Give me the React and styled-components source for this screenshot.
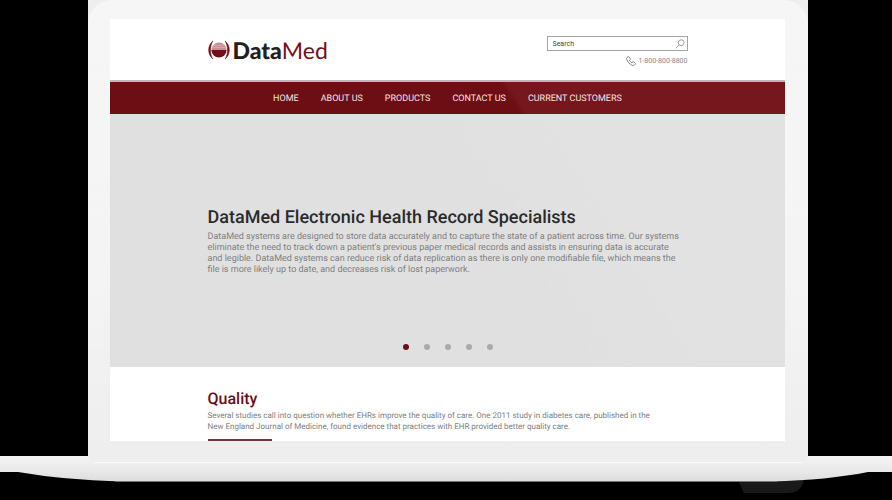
import React, { useState } from "react";
import styled, { createGlobalStyle } from "styled-components";

const GlobalStyle = createGlobalStyle`
  *, *::before, *::after { box-sizing: border-box; }
  body { margin: 0; background: #000; font-family: Roboto, "Liberation Sans", sans-serif; text-rendering: geometricPrecision; }
  h1, h2, p, ul { margin: 0; padding: 0; }
`;

const Stage = styled.div`
  display: flex;
  flex-direction: column;
  min-height: 100vh;
  overflow: hidden;
  background: #000;
`;

const LidBack = styled.div`
  margin: 0 84px 0 88px;
  background: #eeeeee;
`;

const Lid = styled.div`
  padding: 19px 23px 15px 22px;
  border-radius: 24px 24px 4px 4px;
  background: linear-gradient(#f6f6f6, #f4f4f4 60%, #eeeeee);
`;

const Screen = styled.div`
  background: #fff;
  overflow: hidden;
`;

const Column = styled.div`
  width: 100%;
  max-width: 480px;
  margin: 0 auto;
`;

const Header = styled.header`
  padding: 17px 0 13px;
  border-bottom: 2px solid #bdb9b9;
`;

const HeaderRow = styled(Column)`
  display: flex;
  align-items: flex-start;
  justify-content: space-between;
`;

const Logo = styled.a`
  display: flex;
  align-items: center;
  gap: 3px;
  height: 28px;
  color: #741019;
  text-decoration: none;
  font: 400 23px/28px Lato, sans-serif;

  strong { color: #202020; font-weight: 900; }
`;

const Contact = styled.div`
  display: flex;
  flex-direction: column;
  align-items: flex-end;
  gap: 4px;
`;

const SearchBox = styled.form`
  display: flex;
  align-items: center;
  width: 141px;
  height: 15px;
  padding: 0 2px 0 5px;
  border: 1px solid #a5a5a5;
`;

const SearchInput = styled.input`
  flex: 1;
  min-width: 0;
  padding: 0;
  border: 0;
  outline: 0;
  background: none;
  color: #444;
  font: 400 7px/12px Roboto, sans-serif;

  &::placeholder { color: #444; opacity: 1; }
`;

const SearchButton = styled.button`
  display: flex;
  padding: 0;
  border: 0;
  background: none;
  cursor: pointer;
`;

const Phone = styled.a`
  display: flex;
  align-items: center;
  gap: 2px;
  color: #858585;
  text-decoration: none;
  font-size: 7px;
  line-height: 12px;
`;

const Nav = styled.nav`
  display: flex;
  justify-content: center;
  gap: 22px;
  padding-top: 2px;
  background: linear-gradient(58deg, #6d0d14 0 59%, #76161d 60% 100%);
`;

const NavLink = styled.a`
  color: #f3e6e7;
  font-size: 9px;
  line-height: 30px;
  text-decoration: none;
  white-space: nowrap;
`;

const Hero = styled.section`
  padding: 92px 0 17px;
  background: linear-gradient(58deg, #e0e0e0 0 55%, #e2e2e2 75% 100%);
`;

const HeroTitle = styled.h1`
  color: #2b2b2b;
  font-size: 18px;
  font-weight: 500;
  line-height: 24px;
  white-space: nowrap;
`;

const Copy = styled.p`
  color: #808080;
  font-size: ${({ $size }) => $size}px;
  line-height: 11px;
  white-space: nowrap;
`;

const HeroCopy = styled(Copy)`
  padding-top: 2px;
`;

const Dots = styled.div`
  display: flex;
  justify-content: center;
  gap: 15px;
  padding-top: 68px;
`;

const Dot = styled.button`
  width: 6px;
  height: 6px;
  padding: 0;
  border: 0;
  border-radius: 50%;
  background: ${({ $active }) => ($active ? "#681019" : "#aaaaaa")};
  cursor: pointer;
`;

const Quality = styled.section`
  padding-top: 21px;
`;

const QualityTitle = styled.h2`
  color: #681019;
  font-size: 16px;
  font-weight: 500;
  line-height: 22px;
`;

const Rule = styled.div`
  width: 64px;
  height: 2px;
  margin-top: 7px;
  background: #74353c;
`;

const Base = styled.svg`
  display: block;
  width: 100%;
  height: 44px;
`;

const links = ["HOME", "ABOUT US", "PRODUCTS", "CONTACT US", "CURRENT CUSTOMERS"];

function LogoMark() {
  return (
    <svg width="22" height="20" viewBox="0 0 22 20" aria-hidden="true">
      <path d="M3.4 10a7.6 7.6 0 0 1 15.2 0z" fill="#c98f93" />
      <path d="M5 5.5h12M4 7.5h14" stroke="#dcb8ba" strokeWidth=".6" />
      <path d="M3.4 10a7.6 7.6 0 0 0 15.2 0z" fill="#741019" />
      <path d="M5 .9C-.8 5.200-.8 14.800 5 19.100 1.700 14.500 1.700 5.500 5 .9zM17 .9c5.800 4.300 5.800 13.900 0 18.200 3.300-4.600 3.300-13.600 0-18.200z" fill="#741019" stroke="#741019" strokeWidth=".5" />
    </svg>
  );
}

function SearchIcon() {
  return (
    <svg width="10" height="10" viewBox="0 0 10 10" fill="none" stroke="#858585" strokeWidth=".8" aria-hidden="true">
      <circle cx="6.200" cy="3.700" r="2.900" />
      <path d="M4 5.900.6 9.300" />
    </svg>
  );
}

function PhoneIcon() {
  return (
    <svg width="10" height="10" viewBox="0 0 24 24" fill="none" stroke="#806f71" strokeWidth="2" strokeLinejoin="round" aria-hidden="true">
      <path d="M2 4 5 1.500Q6 1 7 2l3.500 5q.5 1-.5 2L8 10.500q2 4 6 6L15.500 14q1-1 2-.5l5 3.500q1 1 .3 2L20 22q-2 1.500-6 0Q4 17 1.500 8 1 5.500 2 4z" />
    </svg>
  );
}

function LaptopBase() {
  return (
    <Base viewBox="0 0 892 44" preserveAspectRatio="none" aria-hidden="true">
      <defs>
        <linearGradient id="metal" x1="0" y1="0" x2="0" y2="1">
          <stop offset="0" stopColor="#f4f4f4" />
          <stop offset=".5" stopColor="#ebebeb" />
          <stop offset="1" stopColor="#dddddd" />
        </linearGradient>
      </defs>
      <path d="M738 24h66q-3 13-16 13h-44z" fill="#191919" />
      <path d="M0 0h892v16h-24Q828 24 772 25.500H120Q64 24 18 16H0z" fill="url(#metal)" />
      <path d="M88 0h720v1q-1 5-7 5H95q-6 0-7-5z" fill="#eeeeee" />
      <path d="M94 6.500h708" stroke="#fafafa" />
      <path d="M115 25.500h662" stroke="#777" strokeWidth=".8" />
    </Base>
  );
}

export default function App() {
  const [slide, setSlide] = useState(0);
  return (
    <>
      <GlobalStyle />
      <Stage>
        <LidBack>
          <Lid>
            <Screen>
              <Header>
                <HeaderRow>
                  <Logo href="#home">
                    <LogoMark />
                    <span><strong>Data</strong>Med</span>
                  </Logo>
                  <Contact>
                    <SearchBox role="search" onSubmit={(e) => e.preventDefault()}>
                      <SearchInput type="text" aria-label="Search" placeholder="Search" />
                      <SearchButton type="submit" aria-label="Submit search"><SearchIcon /></SearchButton>
                    </SearchBox>
                    <Phone href="tel:18008008800"><PhoneIcon />1-800-800-8800</Phone>
                  </Contact>
                </HeaderRow>
              </Header>
              <Nav>
                {links.map((label) => (
                  <NavLink key={label} href="#">{label}</NavLink>
                ))}
              </Nav>
              <Hero>
                <Column>
                  <HeroTitle>DataMed Electronic Health Record Specialists</HeroTitle>
                  <HeroCopy $size={9}>
                    DataMed systems are designed to store data accurately and to capture the state of a patient across time. Our systems<br />
                    eliminate the need to track down a patient's previous paper medical records and assists in ensuring data is accurate<br />
                    and legible. DataMed systems can reduce risk of data replication as there is only one modifiable file, which means the<br />
                    file is more likely up to date, and decreases risk of lost paperwork.
                  </HeroCopy>
                </Column>
                <Dots>
                  {[0, 1, 2, 3, 4].map((i) => (
                    <Dot key={i} type="button" aria-label={`Slide ${i + 1}`} $active={i === slide} onClick={() => setSlide(i)} />
                  ))}
                </Dots>
              </Hero>
              <Quality>
                <Column>
                  <QualityTitle>Quality</QualityTitle>
                  <Copy $size={8}>
                    Several studies call into question whether EHRs improve the quality of care. One 2011 study in diabetes care, published in the<br />
                    New England Journal of Medicine, found evidence that practices with EHR provided better quality care.
                  </Copy>
                  <Rule />
                </Column>
              </Quality>
            </Screen>
          </Lid>
        </LidBack>
        <LaptopBase />
      </Stage>
    </>
  );
}
